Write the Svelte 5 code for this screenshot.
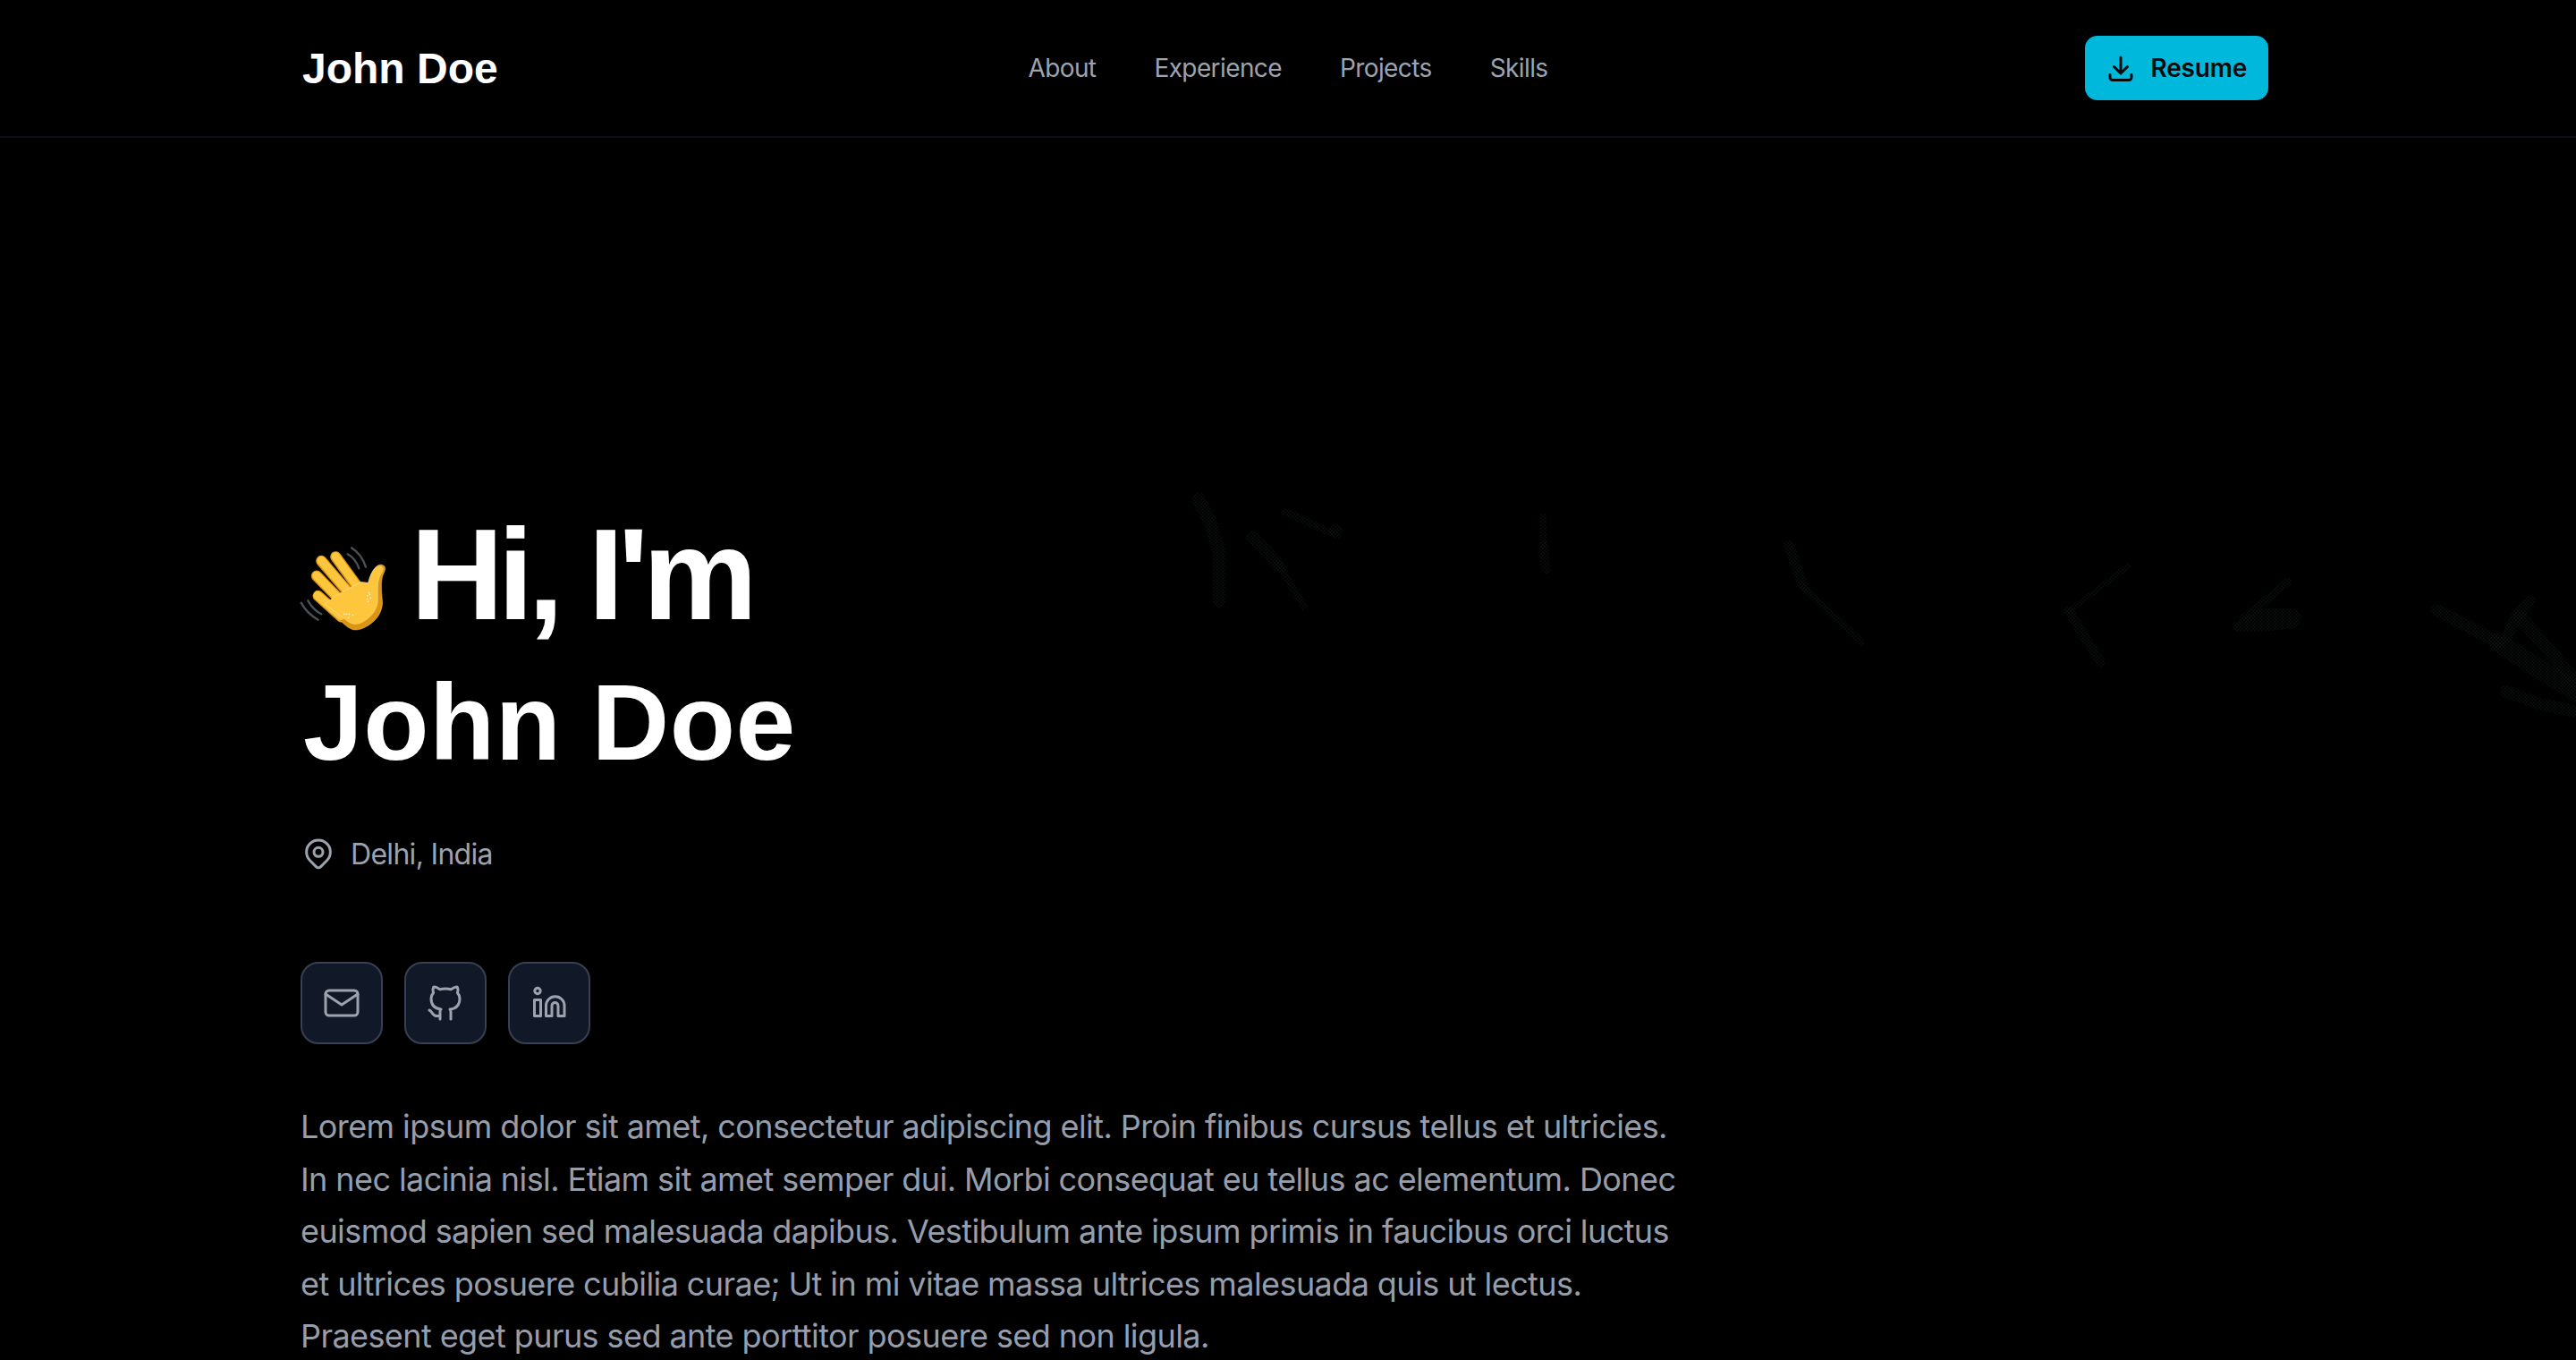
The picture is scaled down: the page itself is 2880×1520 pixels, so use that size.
<script>
  const links = ['About', 'Experience', 'Projects', 'Skills'];
  const intro = 'Lorem ipsum dolor sit amet, consectetur adipiscing elit. Proin finibus cursus tellus et ultricies. In nec lacinia nisl. Etiam sit amet semper dui. Morbi consequat eu tellus ac elementum. Donec euismod sapien sed malesuada dapibus. Vestibulum ante ipsum primis in faucibus orci luctus et ultrices posuere cubilia curae; Ut in mi vitae massa ultrices malesuada quis ut lectus. Praesent eget purus sed ante porttitor posuere sed non ligula.';
</script>

<div class="page">
  <svg class="backdrop" viewBox="0 0 2880 1520" aria-hidden="true">
    <defs>
      <pattern id="dots" width="4" height="4" patternUnits="userSpaceOnUse">
        <circle cx="1" cy="1" r="0.8" fill="#0f1714" />
        <circle cx="3" cy="3" r="0.8" fill="#0f1714" />
      </pattern>
    </defs>
    <g fill="none" stroke="url(#dots)" stroke-linecap="round" stroke-linejoin="round">
      <path stroke-width="15" d="M1340 558 L1353 583 L1363 617 L1363 672" />
      <path stroke-width="14" d="M1400 600 L1430 632" />
      <path stroke-width="8" d="M1430 632 L1458 678" />
      <path stroke-width="9" d="M1437 572 L1487 595" />
      <path stroke-width="15" d="M1493 593 L1494 594" />
      <path stroke-width="7" d="M1725 577 L1726 610" />
      <path stroke-width="11" d="M1726 610 L1728 636" />
      <path stroke-width="12" d="M2000 610 L2016 655" />
      <path stroke-width="8" d="M2016 655 L2081 718" />
      <path stroke-width="6" d="M2379 633 L2313 683" />
      <path stroke-width="11" d="M2313 683 L2348 740" />
      <path stroke-width="9" d="M2558 650 L2510 690" />
      <path fill="url(#dots)" stroke="none" d="M2497 696 L2530 680 L2568 680 L2574 690 L2568 702 L2530 706 L2498 706 Z" />
      <path stroke-width="14" d="M2725 682 L2793 718" />
      <path stroke-width="22" d="M2793 718 L2827 740 L2880 773" />
      <path stroke-width="13" d="M2828 672 L2813 690 L2803 712" />
      <path stroke-width="15" d="M2817 690 L2847 723 L2880 763" />
      <path stroke-width="14" d="M2802 773 L2840 787 L2880 795" />
    </g>
  </svg>

  <header class="topbar">
    <a class="brand" href="#top">John Doe</a>
    <nav class="links">
      {#each links as link}
        <a href="#{link.toLowerCase()}">{link}</a>
      {/each}
    </nav>
    <a class="resume" href="#resume">
      <svg viewBox="0 0 24 24" class="ico-36"><path d="M4 17v2a2 2 0 0 0 2 2h12a2 2 0 0 0 2-2v-2M7 11l5 5l5-5M12 4v12" /></svg>
      <span>Resume</span>
    </a>
  </header>

  <main class="hero">
    <h1>
      <span class="line-one"><span class="wave" role="img" aria-label="waving hand">
        <svg viewBox="0 0 390 390">
          <g fill="none" stroke="#4b5157" stroke-width="7" stroke-linecap="round">
            <path d="M191 82 Q218 97 229 130" />
            <path d="M204 61 Q238 82 252 125" />
            <path d="M35 245 Q54 281 92 302" />
            <path d="M58 238 Q74 268 103 283" />
          </g>
          <g fill="none" stroke="#DB9510" stroke-linecap="round">
            <path stroke-width="37" d="M151 91 L228 197" />
            <path stroke-width="37" d="M103 105 L195 212" />
            <path stroke-width="37" d="M87 155 L170 240" />
            <path stroke-width="37" d="M92 222 L170 292" />
          </g>
          <path fill="#DB9510" d="M150 225 L235 175 L262 178 C268 150 280 120 300 117 C320 118 320 132 312 146 C302 168 303 190 308 245 C306 285 280 312 250 327 C225 340 205 340 185 322 L110 255 Z" />
          <g fill="none" stroke="#FDC63D" stroke-linecap="round">
            <path stroke-width="29" d="M151 90 L226 194" />
            <path stroke-width="29" d="M103 104 L193 209" />
            <path stroke-width="29" d="M87 154 L168 238" />
            <path stroke-width="29" d="M91 221 L168 288" />
          </g>
          <path fill="#FDC63D" d="M150 222 L232 177 L259 180 C266 150 278 125 298 122 C312 122 312 134 304 146 C288 170 292 200 292 240 C290 270 265 298 240 310 C222 320 205 318 190 306 L115 250 Z" />
          <g fill="#FFF1C8">
            <circle cx="262" cy="212" r="1.6" /><circle cx="265" cy="217" r="1.6" /><circle cx="257" cy="222" r="1.6" /><circle cx="268" cy="229" r="1.6" /><circle cx="256" cy="232" r="1.6" /><circle cx="259" cy="241" r="1.6" />
            <circle cx="179" cy="283" r="1.6" /><circle cx="187" cy="283" r="1.6" /><circle cx="196" cy="283" r="1.6" /><circle cx="208" cy="286" r="1.6" /><circle cx="193" cy="295" r="1.6" />
          </g>
        </svg>
      </span>Hi, I'm</span>
      <span class="line-two">John Doe</span>
    </h1>

    <p class="place">
      <svg viewBox="0 0 24 24" class="ico-40"><path d="M9 11a3 3 0 1 0 6 0a3 3 0 0 0-6 0" /><path d="M17.657 16.657l-4.243 4.243a2 2 0 0 1-2.827 0l-4.244-4.243a8 8 0 1 1 11.314 0z" /></svg>
      <span>Delhi, India</span>
    </p>

    <div class="socials">
      <a href="#mail" aria-label="Email">
        <svg viewBox="0 0 48 48" class="ico-48"><path d="M6 14a4 4 0 0 1 4-4h28a4 4 0 0 1 4 4v20a4 4 0 0 1-4 4H10a4 4 0 0 1-4-4V14z" /><path d="M6 14l18 12l18-12" /></svg>
      </a>
      <a href="#github" aria-label="GitHub">
        <svg viewBox="0 0 24 24" class="ico-48 thin"><path d="M9 19c-4.3 1.4 -4.3 -2.5 -6 -3m12 5v-3.5c0 -1 .1 -1.4 -.5 -2c2.8 -.3 5.5 -1.4 5.5 -6a4.6 4.6 0 0 0 -1.3 -3.2a4.2 4.2 0 0 0 -.1 -3.2s-1.1 -.3 -3.5 1.3a12.3 12.3 0 0 0 -6.2 0c-2.4 -1.6 -3.5 -1.3 -3.5 -1.3a4.2 4.2 0 0 0 -.1 3.2a4.6 4.6 0 0 0 -1.3 3.2c0 4.6 2.7 5.7 5.5 6c-.6 .6 -.6 1.2 -.5 2v3.5" /></svg>
      </a>
      <a href="#linkedin" aria-label="LinkedIn">
        <svg viewBox="0 0 48 48" class="ico-48"><circle cx="11" cy="10.5" r="3.2" /><path d="M7.5 20.5H14.5V38.5H7.5Z" /><path d="M20.5 38.5V27A10 10 0 0 1 41 27V38.5H34V27a3.5 3.5 0 0 0-7 0V38.5Z" /></svg>
      </a>
    </div>

    <p class="intro">{intro}</p>
  </main>
</div>

<style>
  :global(html), :global(body) {
    margin: 0;
    height: 1520px;
    overflow: hidden;
    background: #000;
  }
  .page {
    position: relative;
    height: 1520px;
    overflow: hidden;
    background: #000;
    font-family: Inter, "Liberation Sans", sans-serif;
    color: #fff;
  }
  .backdrop {
    position: absolute;
    inset: 0;
    width: 100%;
    height: 100%;
  }
  a {
    color: inherit;
    text-decoration: none;
  }
  svg:not(.backdrop) {
    display: block;
    flex: none;
    fill: none;
    stroke: currentColor;
    stroke-linecap: round;
    stroke-linejoin: round;
  }
  .ico-36 { width: 36px; height: 36px; stroke-width: 2; }
  .ico-40 { width: 40px; height: 40px; stroke-width: 1.8; }
  .ico-48 { width: 48px; height: 48px; stroke-width: 3; }
  .ico-48.thin { stroke-width: 1.5; }

  .topbar {
    position: relative;
    display: grid;
    grid-template-columns: 1fr auto 1fr;
    align-items: center;
    height: 152px;
    padding: 0 344px 0 336px;
    border-bottom: 2px solid #0d1117;
  }
  .brand {
    margin-left: 2px;
    font-family: "Liberation Sans", sans-serif;
    font-size: 48px;
    font-weight: 700;
  }
  .links {
    display: flex;
    gap: 65px;
    margin-left: 8px;
    font-size: 28px;
    letter-spacing: -0.6px;
    color: #9ca3af;
  }
  .resume {
    justify-self: end;
    display: flex;
    align-items: center;
    gap: 15px;
    height: 72px;
    padding: 0 24px 0 22px;
    border-radius: 14px;
    background: #00b8db;
    color: #0a0a0a;
    font-size: 28px;
    font-weight: 600;
    letter-spacing: -0.2px;
  }

  .hero {
    position: relative;
    width: 1560px;
    margin-left: 336px;
    padding-top: 411px;
  }
  h1 {
    margin: 0;
    font-family: "Liberation Sans", sans-serif;
    font-weight: 700;
  }
  .line-one {
    display: block;
    height: 156px;
    font-size: 144px;
    line-height: 156px;
    letter-spacing: -6.4px;
  }
  .line-two {
    display: block;
    margin-top: 20px;
    margin-left: 3px;
    font-size: 120px;
    line-height: 132px;
    letter-spacing: 0.5px;
  }
  .wave {
    display: inline-block;
    width: 130px;
    height: 130px;
    vertical-align: -30px;
    margin: 0 4px 0 -11px;
  }
  .wave svg {
    width: 130px;
    height: 130px;
  }
  .place {
    display: flex;
    align-items: center;
    gap: 16px;
    margin: 61px 0 0;
    font-size: 32px;
    letter-spacing: -0.7px;
    color: #9ca3af;
  }
  .socials {
    display: flex;
    gap: 24px;
    margin-top: 101px;
  }
  .socials a {
    box-sizing: border-box;
    display: flex;
    align-items: center;
    justify-content: center;
    width: 92px;
    height: 92px;
    border: 2px solid #374151;
    border-radius: 20px;
    background: #111827;
    color: #9ca3af;
  }
  .intro {
    margin: 63px 0 0;
    font-size: 36px;
    line-height: 58.5px;
    letter-spacing: -0.58px;
    color: #969dab;
  }
</style>
